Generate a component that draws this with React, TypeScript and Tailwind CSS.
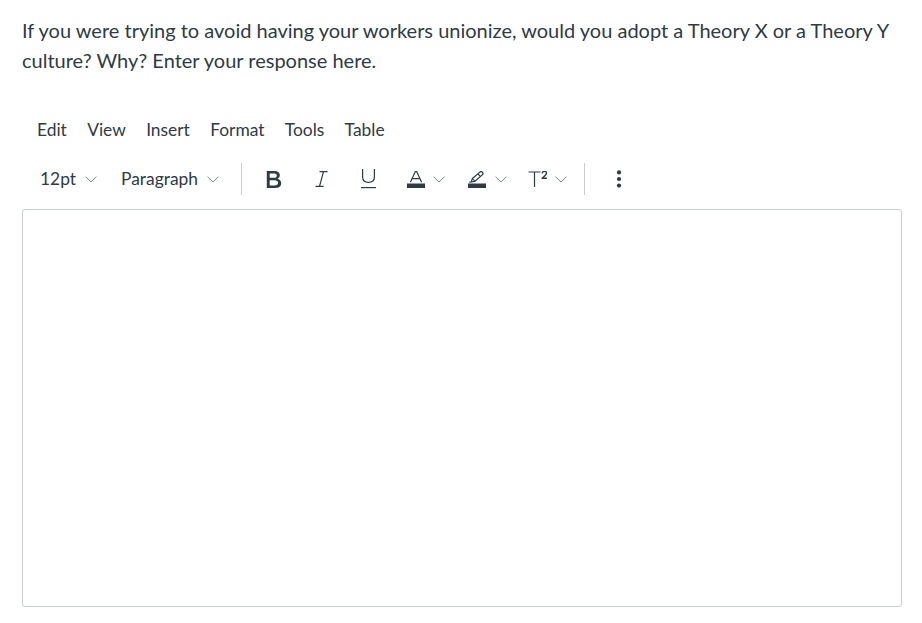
import React from "react";

const Chevron = () => (
  <svg width="12" height="7" viewBox="0 0 12 7" fill="none" className="shrink-0 block">
    <path d="M0.6 0.8 L6 6 L11.4 0.8" stroke="#7b8790" strokeWidth="1" />
  </svg>
);

export default function App() {
  return (
    <div
      className="w-[922px] h-[623px] bg-white text-[#2d3b45] overflow-hidden"
      style={{ fontFamily: "Lato, 'Liberation Sans', sans-serif" }}
    >
      <div className="pt-[15px] pl-[22px] pr-[20px] text-[20px] leading-[30px]">
        If you were trying to avoid having your workers unionize, would you adopt a Theory X or a Theory Y culture? Why? Enter your response here.
      </div>

      <div className="mt-[41px] pl-[37px] flex items-center h-[28px] text-[17.4px] gap-[20.3px]">
        <span>Edit</span>
        <span>View</span>
        <span>Insert</span>
        <span>Format</span>
        <span>Tools</span>
        <span>Table</span>
      </div>

      <div className="mt-[15px] pl-[40px] flex items-center h-[40px] text-[17.4px]">
        <span className="w-[36px]">12pt</span>
        <span className="ml-[9px]"><Chevron /></span>
        <span className="ml-[24px] w-[78px]">Paragraph</span>
        <span className="ml-[8px]"><Chevron /></span>
        <span className="ml-[22px] w-px h-[32px] bg-[#c7cdd1]" />
        <span className="ml-[24px] block">
          <svg width="16" height="17" viewBox="0 0 15 17" className="block">
            <path
              d="M0.3 0 H8 C11.5 0 13.3 1.8 13.3 4.3 C13.3 6.1 12.3 7.3 10.8 7.8 C13 8.3 14.7 9.9 14.7 12.3 C14.7 15.2 12.5 17 8.8 17 H0.3 Z M3.2 2.6 V6.8 H7.8 C9.5 6.8 10.3 6 10.3 4.7 C10.3 3.4 9.5 2.6 7.8 2.6 Z M3.2 9.3 V14.4 H8.3 C10.3 14.4 11.6 13.5 11.6 11.85 C11.6 10.2 10.3 9.3 8.3 9.3 Z"
              fill="#2d3b45"
              fillRule="evenodd"
            />
          </svg>
        </span>
        <span className="ml-[33px] block">
          <svg width="13" height="16" viewBox="0 0 13 16" fill="none" stroke="#2d3b45" strokeWidth="1.2" className="block">
            <path d="M4.5 0.6 H12.5 M0.5 15.4 H8.5 M8.5 0.6 L4.5 15.4" />
          </svg>
        </span>
        <span className="ml-[32px] block">
          <svg width="17" height="20" viewBox="0 0 17 20" fill="none" stroke="#2d3b45" strokeWidth="1.2" className="block">
            <path d="M2.6 0 V8 C2.6 11.3 5 13.3 8.5 13.3 C12 13.3 14.4 11.3 14.4 8 V0" />
            <path d="M1 18.6 H16" />
          </svg>
        </span>
        <span className="ml-[30px] block">
          <svg width="18" height="17" viewBox="0 0 18 17" className="block">
            <path d="M3.4 11.3 L8.3 0.6 H9.7 L14.6 11.3 M5.2 7.6 H12.8" fill="none" stroke="#2d3b45" strokeWidth="1.2" />
            <rect x="0" y="12.5" width="18" height="4.5" fill="#2d3b45" />
          </svg>
        </span>
        <span className="ml-[8px]"><Chevron /></span>
        <span className="ml-[23px] block">
          <svg width="18" height="17" viewBox="0 0 18 17" fill="none" className="block">
            <path d="M3.2 11 L4.4 7.5 L11.8 1.1 C12.6 0.4 13.8 0.5 14.5 1.3 C15.2 2.1 15.1 3.2 14.3 3.9 L6.9 10.3 Z" stroke="#2d3b45" strokeWidth="1.2" strokeLinejoin="round" />
            <path d="M4.4 7.5 L6.9 10.3 M9.9 2.8 L12.5 5.5 M3.2 11 L1.2 11.2" stroke="#2d3b45" strokeWidth="1.1" />
            <rect x="0" y="12.5" width="18" height="4.5" fill="#2d3b45" />
          </svg>
        </span>
        <span className="ml-[9px]"><Chevron /></span>
        <span className="ml-[21px] block">
          <svg width="21" height="16" viewBox="0 0 21 16" fill="none" className="block">
            <path d="M0.5 1 H12.5 M6.5 1 V16" stroke="#2d3b45" strokeWidth="1.2" />
            <path d="M14.2 2.3 C14.4 0.9 15.3 0.4 16.4 0.4 C17.6 0.4 18.5 1.1 18.5 2.2 C18.5 3.6 17 4.6 14.1 7.2 H18.9" stroke="#2d3b45" strokeWidth="1.4" strokeLinejoin="round" />
          </svg>
        </span>
        <span className="ml-[6px]"><Chevron /></span>
        <span className="ml-[17px] w-px h-[32px] bg-[#c7cdd1]" />
        <span className="ml-[31px] block">
          <svg width="6" height="18" viewBox="0 0 6 18" className="block">
            <circle cx="3" cy="2.4" r="2.1" fill="#2d3b45" />
            <circle cx="3" cy="9" r="2.1" fill="#2d3b45" />
            <circle cx="3" cy="15.6" r="2.1" fill="#2d3b45" />
          </svg>
        </span>
      </div>

      <div className="mt-[10px] ml-[22px] w-[880px] h-[398px] border border-[#c7cdd1] rounded-[3px]" />
    </div>
  );
}
